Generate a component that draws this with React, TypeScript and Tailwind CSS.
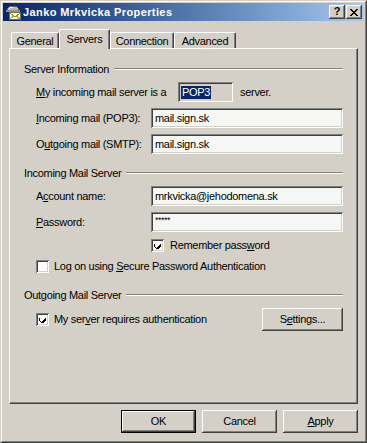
import React from "react";

const raised =
  "shadow-[inset_-1px_-1px_0_#404040,inset_1px_1px_0_#ffffff,inset_-2px_-2px_0_#808080,inset_2px_2px_0_#d4d0c8]";
const sunken =
  "shadow-[inset_1px_1px_0_#808080,inset_-1px_-1px_0_#ffffff,inset_2px_2px_0_#404040,inset_-2px_-2px_0_#d4d0c8]";

function Group({ title }: { title: string }) {
  return (
    <div className="flex items-center h-[14px]">
      <span className="leading-[14px]">{title}</span>
      <div className="flex-1 ml-[5px] h-[2px] border-t border-t-[#808080] border-b border-b-white" />
    </div>
  );
}

function Input({ value, small }: { value: string; small?: boolean }) {
  return (
    <div className={`h-[20px] w-[192px] bg-[#f4f7f3] ${sunken} flex items-center pl-[4px]`}>
      <span className={small ? "text-[9px] leading-[9px] -mt-[4px] tracking-[-0.5px]" : "leading-[13px]"}>{value}</span>
    </div>
  );
}

function Check({ checked }: { checked?: boolean }) {
  return (
    <div className={`w-[13px] h-[13px] bg-white ${sunken} flex items-center justify-center shrink-0`}>
      {checked && (
        <svg width="7" height="7" viewBox="0 0 7 7" shapeRendering="crispEdges">
          <path d="M0 2h1v3h1v1h1v-1h1v-1h1v-1h1v-1h1v3h-1v1h-1v1h-1v1h-1v-1h-1v-1h-1v-1h-1z" fill="#000" />
        </svg>
      )}
    </div>
  );
}

function Btn({ children, def, w = "w-[75px]" }: { children: React.ReactNode; def?: boolean; w?: string }) {
  return (
    <div className={`${w} h-[23px] ${def ? "border border-black" : ""} bg-[#d4d0c8]`}>
      <div className={`w-full h-full ${raised} flex items-center justify-center`}>{children}</div>
    </div>
  );
}

function TitleIcon() {
  return (
    <svg width="16" height="16" viewBox="0 0 16 16" shapeRendering="crispEdges">
      <path d="M2 7 Q2 2 8 2 Q14 2 14 7 Z" fill="#b8b8b8" stroke="#606060" strokeWidth="1" />
      <path d="M4 5 Q5 3 8 3" fill="none" stroke="#ffffff" strokeWidth="1" />
      <rect x="1" y="6" width="14" height="2" fill="#909090" />
      <rect x="4.5" y="8.5" width="11" height="7" fill="#ffffc8" stroke="#707050" />
      <path d="M5 9 L10 13 L15 9" fill="none" stroke="#80a040" strokeWidth="1" />
      <path d="M5 15 L9 12 M15 15 L11 12" fill="none" stroke="#a0a060" strokeWidth="1" />
    </svg>
  );
}

function Tab({ label, selected, w }: { label: string; selected?: boolean; w: string }) {
  if (selected) {
    return (
      <div
        className={`${w} h-[20px] -mb-[1px] relative z-10 bg-[#d4d0c8] rounded-t-[2px] border-l border-t border-white border-r border-r-[#404040] shadow-[inset_-1px_0_0_#808080] flex justify-center pt-[3px]`}
      >
        <span className="leading-[13px]">{label}</span>
      </div>
    );
  }
  return (
    <div
      className={`${w} h-[16px] bg-[#d4d0c8] rounded-t-[2px] border-l border-t border-white border-r border-r-[#404040] shadow-[inset_-1px_0_0_#808080] flex justify-center pt-[2px]`}
    >
      <span className="leading-[13px]">{label}</span>
    </div>
  );
}

export default function App() {
  return (
    <div className="w-[367px] h-[443px] font-['Liberation_Sans',Arial,sans-serif] text-[11px] tracking-[-0.3px] text-black select-none">
      <div className="w-full h-full border border-t-[#d4d0c8] border-l-[#d4d0c8] border-r-[#404040] border-b-[#404040]">
        <div className="w-full h-full border border-t-white border-l-white border-r-[#808080] border-b-[#808080] bg-[#d4d0c8] p-px flex flex-col">
          {/* Title bar */}
          <div className="h-[18px] shrink-0 flex items-center bg-gradient-to-r from-[#0a246a] to-[#a6caf0] pl-[2px] pr-[2px]">
            <TitleIcon />
            <span className="ml-[2px] text-white font-bold text-[11px] tracking-[0.4px] leading-[13px]">Janko Mrkvicka Properties</span>
            <div className="flex-1" />
            <div className={`w-[16px] h-[14px] bg-[#d4d0c8] ${raised} flex items-center justify-center`}>
              <span className="font-bold text-[11px] leading-[11px] tracking-normal -mt-px">?</span>
            </div>
            <div className={`ml-[1px] w-[16px] h-[14px] bg-[#d4d0c8] ${raised} flex items-center justify-center`}>
              <svg width="8" height="7" viewBox="0 0 8 7" shapeRendering="crispEdges">
                <path d="M0 0h2v1h1v1h2v-1h1v-1h2v1h-1v1h-1v1h-1v1h1v1h1v1h1v1h-2v-1h-1v-1h-2v1h-1v1h-2v-1h1v-1h1v-1h1v-1h-1v-1h-1v-1h-1z" fill="#000" />
              </svg>
            </div>
          </div>

          {/* Tabs */}
          <div className="mt-[8px] h-[19px] shrink-0 flex items-end pl-[8px]">
            <Tab label="General" w="w-[48px]" />
            <Tab label="Servers" w="w-[51px]" selected />
            <Tab label="Connection" w="w-[64px]" />
            <Tab label="Advanced" w="w-[62px]" />
          </div>

          {/* Panel */}
          <div className="ml-[6px] w-[349px] h-[356px] shrink-0 border-l border-t border-white border-r border-b border-r-[#404040] border-b-[#404040] shadow-[inset_-1px_-1px_0_#808080] pl-[14px] pr-[14px] flex flex-col">
            <div className="mt-[13px]">
              <Group title="Server Information" />
            </div>
            <div className="mt-[6px] pl-[12px] h-[20px] flex items-center">
              <span className="w-[142px]">
                <u>M</u>y incoming mail server is a
              </span>
              <div className={`w-[55px] h-[20px] ${sunken} flex items-center pl-[3px]`}>
                <span className="bg-[#0a246a] text-white leading-[13px] px-px">POP3</span>
              </div>
              <span className="ml-[7px]">server.</span>
            </div>
            <div className="mt-[6px] pl-[12px] h-[20px] flex items-center">
              <span className="w-[115px]">
                <u>I</u>ncoming mail (POP3):
              </span>
              <Input value="mail.sign.sk" />
            </div>
            <div className="mt-[6px] pl-[12px] h-[20px] flex items-center">
              <span className="w-[115px]">
                O<u>u</u>tgoing mail (SMTP):
              </span>
              <Input value="mail.sign.sk" />
            </div>

            <div className="mt-[12px]">
              <Group title="Incoming Mail Server" />
            </div>
            <div className="mt-[6px] pl-[12px] h-[20px] flex items-center">
              <span className="w-[115px]">
                A<u>c</u>count name:
              </span>
              <Input value="mrkvicka@jehodomena.sk" />
            </div>
            <div className="mt-[6px] pl-[12px] h-[20px] flex items-center">
              <span className="w-[115px]">
                <u>P</u>assword:
              </span>
              <Input value="*****" small />
            </div>
            <div className="mt-[7px] pl-[127px] h-[13px] flex items-center">
              <Check checked />
              <span className="ml-[6px]">
                Remember pass<u>w</u>ord
              </span>
            </div>
            <div className="mt-[8px] pl-[12px] h-[13px] flex items-center">
              <Check />
              <span className="ml-[5px]">
                Log on using <u>S</u>ecure Password Authentication
              </span>
            </div>

            <div className="mt-[15px]">
              <Group title="Outgoing Mail Server" />
            </div>
            <div className="mt-[6px] pl-[12px] h-[23px] flex items-center">
              <Check checked />
              <span className="ml-[5px]">
                My ser<u>v</u>er requires authentication
              </span>
              <div className="flex-1" />
              <Btn w="w-[81px]">
                S<u>e</u>ttings...
              </Btn>
            </div>
          </div>

          {/* Buttons */}
          <div className="mt-[6px] flex justify-end gap-[6px] pr-[6px]">
            <Btn def>OK</Btn>
            <Btn>Cancel</Btn>
            <Btn>
              <u>A</u>pply
            </Btn>
          </div>
        </div>
      </div>
    </div>
  );
}
